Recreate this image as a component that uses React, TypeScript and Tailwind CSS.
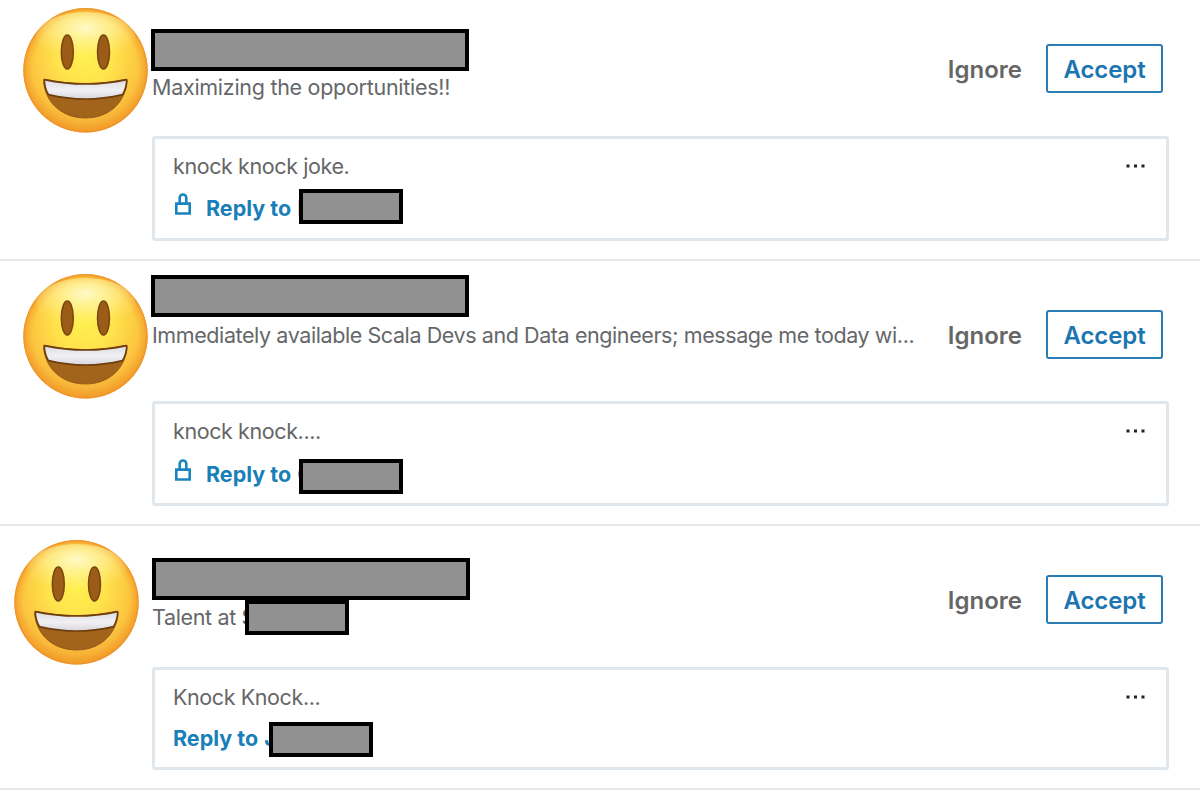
type Invitation = {
  headline: string;
  message: string;
  name: string;
  locked: boolean;
  row: string;
  face: string;
  nameBar: string;
  headlineClass: string;
  headlineBar?: string;
  box: string;
  replyClass: string;
  replyBar: string;
};

const invitations: Invitation[] = [
  {
    headline: "Maximizing the opportunities!!",
    message: "knock knock joke.",
    name: "N",
    locked: true,
    row: "h-[261px] pt-2",
    face: "ml-[23px] mr-1",
    nameBar: "mt-[21px]",
    headlineClass: "mt-0.5 tracking-[-0.28px]",
    box: "h-[105px]",
    replyClass: "mt-[14px]",
    replyBar: "left-[144px] top-[50px]",
  },
  {
    headline: "Immediately available Scala Devs and Data engineers; message me today wi...",
    message: "knock knock....",
    name: "C",
    locked: true,
    row: "h-[265px] pt-[13px]",
    face: "ml-[23px] mr-1",
    nameBar: "mt-px",
    headlineClass: "mt-1 tracking-[-0.41px]",
    box: "h-[105px] -mt-px",
    replyClass: "mt-[15px]",
    replyBar: "left-[144px] top-[55px]",
  },
  {
    headline: "Talent at S",
    message: "Knock Knock...",
    name: "J",
    locked: false,
    row: "h-[264px] pt-[13px]",
    face: "mt-px ml-3.5 mr-[13px]",
    nameBar: "mt-[19px] ml-px",
    headlineClass: "mt-[3px] tracking-[-0.35px]",
    headlineBar: "left-[94px] -top-[3px]",
    box: "h-[103px]",
    replyClass: "mt-[13px]",
    replyBar: "left-[114px] top-[52px]",
  },
];

function Face({ className }: { className: string }) {
  return (
    <svg viewBox="0 0 125 125" className={`size-[125px] shrink-0 ${className}`}>
      <defs>
        <radialGradient id="skin" cx="62" cy="48" r="80" gradientUnits="userSpaceOnUse">
          <stop offset="0" stopColor="#fff04f" />
          <stop offset="0.35" stopColor="#ffe34c" />
          <stop offset="0.7" stopColor="#fcc540" />
          <stop offset="1" stopColor="#f09a2c" />
        </radialGradient>
        <radialGradient id="rim" cx="62.5" cy="62.5" r="62.5" gradientUnits="userSpaceOnUse">
          <stop offset="0.84" stopColor="#f39b25" stopOpacity="0" />
          <stop offset="0.95" stopColor="#f39b25" stopOpacity="0.5" />
          <stop offset="1" stopColor="#e9872c" stopOpacity="0.9" />
        </radialGradient>
        <radialGradient id="shine" cx="0.5" cy="0.3" r="0.6">
          <stop offset="0" stopColor="#fffbd0" stopOpacity="0.95" />
          <stop offset="0.5" stopColor="#fff7a8" stopOpacity="0.55" />
          <stop offset="1" stopColor="#fff38a" stopOpacity="0" />
        </radialGradient>
        <linearGradient id="teeth" x1="0" y1="0" x2="0" y2="1">
          <stop offset="0" stopColor="#dcdde2" />
          <stop offset="0.55" stopColor="#f1f1f4" />
          <stop offset="1" stopColor="#d5d5dc" />
        </linearGradient>
      </defs>
      <circle cx="62.5" cy="62.2" r="62.2" fill="url(#skin)" />
      <circle cx="62.5" cy="62.2" r="62.2" fill="url(#rim)" />
      <ellipse cx="62.5" cy="30" rx="50" ry="26" fill="url(#shine)" />
      <ellipse cx="44.3" cy="44" rx="6" ry="17" fill="#9b5c17" stroke="#7b450f" strokeWidth="1.5" />
      <ellipse cx="80.5" cy="44" rx="6" ry="17" fill="#9b5c17" stroke="#7b450f" strokeWidth="1.5" />
      <path
        d="M21.5 71.3 Q62.5 80 103 71.3 Q104.5 71.5 104 75 C101 97 84 110 62.5 110 C41 110 23.5 97 20.7 75 Q20.3 71.5 21.5 71.3Z"
        fill="#a2641a"
        stroke="#8a5115"
        strokeWidth="0.8"
      />
      <path
        d="M21.3 71.6 Q62.5 80.5 103.7 71.6 Q103.7 80 99.5 86.6 Q62.5 95.5 25.5 86.6 Q21.3 80 21.3 71.6Z"
        fill="url(#teeth)"
        stroke="#6f3c0c"
        strokeWidth="1.6"
        strokeLinejoin="round"
      />
    </svg>
  );
}

function LockIcon() {
  return (
    <svg viewBox="0 0 16 23" className="ml-0.5 mr-[15px] -mt-2 h-[23px] w-4 shrink-0" fill="none" stroke="#1a84bc" strokeWidth="2.6">
      <path d="M1.3 10.6h13.4v9.9H1.3z" />
      <path d="M4.7 10.5V4.8a3.3 3.3 0 0 1 6.6 0v5.7" />
    </svg>
  );
}

function Redacted({ className }: { className: string }) {
  return <span className={`block border-4 border-black bg-[#919191] ${className}`} />;
}

function InvitationRow({ item }: { item: Invitation }) {
  return (
    <li className={`border-b-2 border-[#e4e7eb] ${item.row}`}>
      <div className="flex h-32 items-start">
        <Face className={item.face} />
        <div className="min-w-0 flex-1 -ml-px">
          <Redacted className={`h-[42px] w-[318px] ${item.nameBar}`} />
          <div className={`relative pl-px ${item.headlineClass}`}>
            <p className="whitespace-nowrap text-[21.5px] leading-7 text-[#65676a]">{item.headline}</p>
            {item.headlineBar && <Redacted className={`absolute h-[35px] w-[104px] ${item.headlineBar}`} />}
          </div>
        </div>
        <div className="mt-9 mr-[37px] flex items-center gap-6">
          <button className="pt-0.5 text-2xl font-semibold text-[#666]">Ignore</button>
          <button className="h-[49px] w-[117px] rounded-[3px] border-2 border-[#2a7cb4] pt-0.5 text-2xl font-semibold tracking-[-0.1px] text-[#1b75b0]">
            Accept
          </button>
        </div>
      </div>
      <div className={`relative ml-[152px] mr-[31px] rounded-[3px] border-3 border-[#e0e7ec] pl-[18px] pt-[13px] ${item.box}`}>
        <div className="flex justify-between pr-5">
          <p className="text-[21.5px] leading-7 tracking-[-0.4px] text-[#666]">{item.message}</p>
          <svg viewBox="0 0 20 4" className="mt-3 h-1 w-5" fill="#222">
            <path d="M.5 .5h3v3h-3zM8 .5h3v3H8zM15.5 .5h3v3h-3z" />
          </svg>
        </div>
        <div className={`flex items-center ${item.replyClass}`}>
          {item.locked && <LockIcon />}
          <a className="whitespace-nowrap text-[21.5px] leading-7 font-bold text-[#1a7fb9]">
            Reply to <span className="ml-px">{item.name}</span>
          </a>
        </div>
        <Redacted className={`absolute h-[35px] w-[104px] ${item.replyBar}`} />
      </div>
    </li>
  );
}

export default function App() {
  return (
    <ul className="h-[790px] w-[1200px] overflow-hidden bg-white font-['Inter',sans-serif]">
      {invitations.map((item) => (
        <InvitationRow key={item.headline} item={item} />
      ))}
    </ul>
  );
}
